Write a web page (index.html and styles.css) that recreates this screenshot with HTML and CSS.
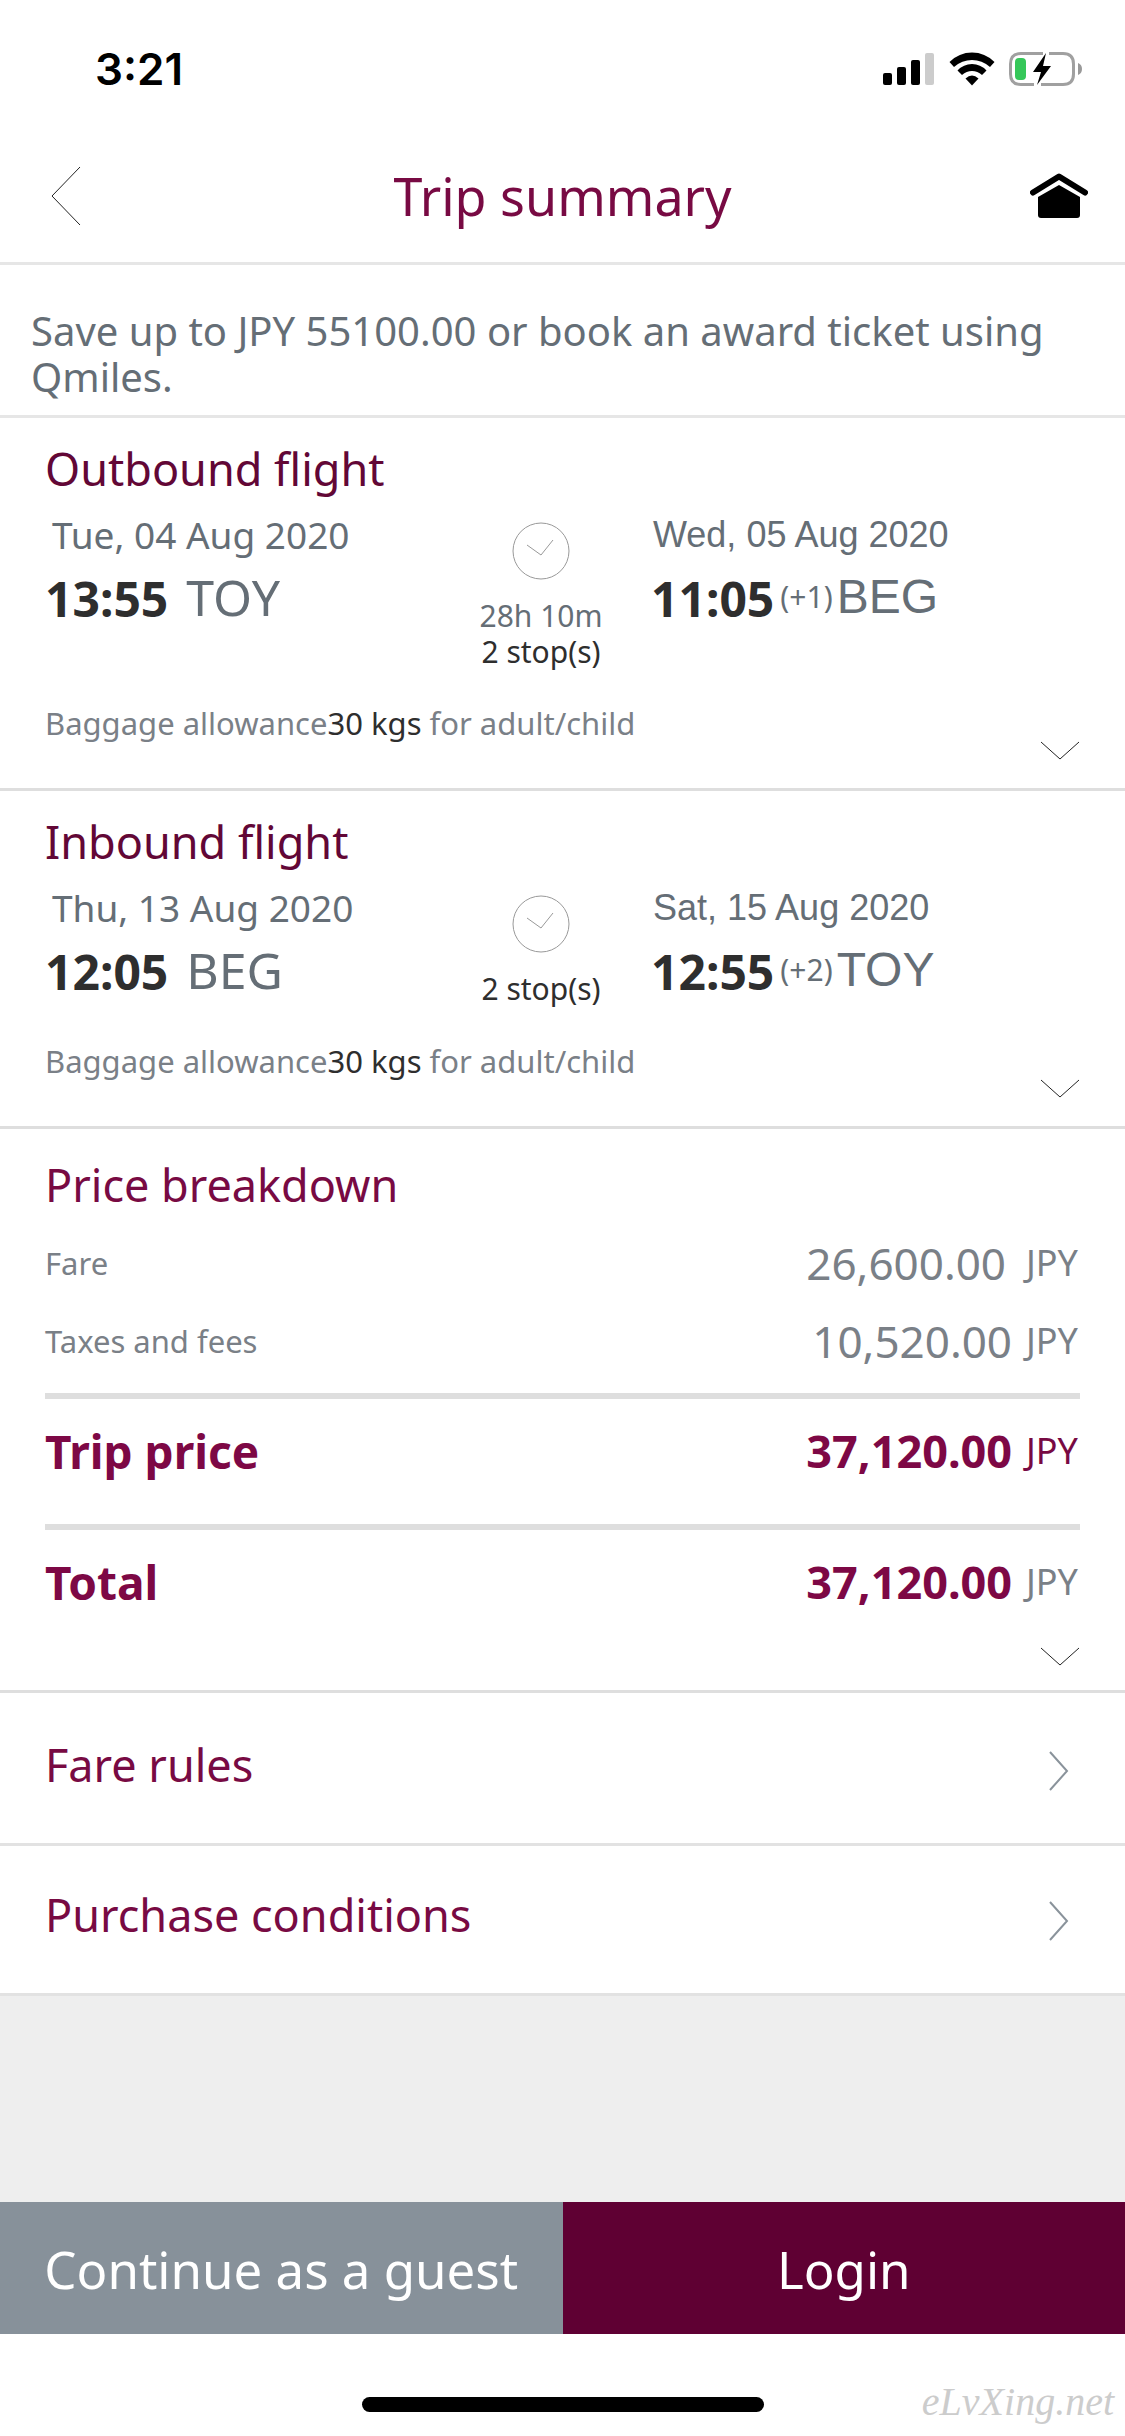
FILE: index.html
```html
<!DOCTYPE html>
<html lang="en">
<head>
<meta charset="utf-8">
<meta name="viewport" content="width=device-width, initial-scale=1">
<title>Trip summary</title>
<link rel="stylesheet" href="styles.css">
</head>
<body>
<div class="status">
  <span class="status-time">3:21</span>
  <div class="status-icons">
    <svg class="signal" viewBox="0 0 52 34" aria-hidden="true">
      <rect x="0" y="21" width="9" height="12" rx="2"/><rect x="14" y="15" width="9" height="18" rx="2"/>
      <rect x="28" y="8" width="9" height="25" rx="2"/><rect x="42" y="1" width="9" height="32" rx="2" fill="#ccc"/>
    </svg>
    <svg class="wifi" viewBox="0 0 46 34" aria-hidden="true">
      <path d="M0.500 10Q10 0.500 23 0.500T45.500 10L41 15Q33 8 23 8T5 15Z"/>
      <path d="M8.500 18.500Q14.500 12 23 12T37.500 18.500L33 23Q28.500 19 23 19T13 23Z"/>
      <path d="M16.500 26.500Q23 20.500 29.500 26.500L23 33.500Z"/>
    </svg>
    <svg class="battery" viewBox="0 0 74 34" aria-hidden="true">
      <path d="M34 1.500H12Q1.500 1.500 1.500 12V22Q1.500 32.500 12 32.500H25M40 1.500H54Q64.500 1.500 64.500 12V22Q64.500 32.500 54 32.500H32" fill="none" stroke="#a0a0a0" stroke-width="3"/>
      <path d="M69 11Q73 12.500 73 17T69 23Z" fill="#999"/>
      <rect x="6" y="6" width="11" height="22" rx="4" fill="#35c759"/>
      <path d="M37 1L24 20H32L28 33L42 14H34Z"/>
    </svg>
  </div>
</div>

<header class="header">
  <button class="icon-button" type="button" aria-label="Back">
    <svg class="back" viewBox="0 0 30 60" aria-hidden="true"><path d="M29 1L1 30L29 59" fill="none" stroke="#222"/></svg>
  </button>
  <h1 class="title">Trip summary</h1>
  <a class="icon-button" href="#home" aria-label="Home">
    <svg class="home" viewBox="0 0 58 46" aria-hidden="true">
      <path d="M3 19.500L29 3.500L55 19.500" fill="none" stroke="#000" stroke-width="6" stroke-linecap="round" stroke-linejoin="round"/>
      <path d="M8 24L29 12L50 24V42Q50 45 47 45H11Q8 45 8 42Z"/>
    </svg>
  </a>
</header>

<main class="content">
  <p class="notice">Save up to JPY 55100.00 or book an award ticket using Qmiles.</p>

  <section class="flight">
    <h2 class="heading heading-flight">Outbound flight</h2>
    <div class="route">
      <div class="leg">
        <div class="date date-from">Tue, 04 Aug 2020</div>
        <div class="stop"><b class="time">13:55</b><span class="code code-from">TOY</span></div>
      </div>
      <div class="duration">
        <svg class="clock" viewBox="0 0 58 58" aria-hidden="true"><circle cx="29" cy="29" r="28"/><path d="M15 23L29 33L41 18"/></svg>
        <span>28h 10m</span>
        <span class="dark">2 stop(s)</span>
      </div>
      <div class="leg">
        <div class="date date-to">Wed, 05 Aug 2020</div>
        <div class="stop"><b class="time">11:05</b><span class="plus">(+1)</span><span class="code code-to">BEG</span></div>
      </div>
    </div>
    <div class="baggage">
      <p class="allowance">Baggage allowance<span class="dark">30 kgs</span> for adult/child</p>
      <button class="expand" type="button" aria-label="Show outbound flight details"><svg class="down" viewBox="0 0 40 20" aria-hidden="true"><path d="M1 1L20 18L39 1"/></svg></button>
    </div>
  </section>

  <section class="flight">
    <h2 class="heading heading-flight">Inbound flight</h2>
    <div class="route">
      <div class="leg">
        <div class="date date-from">Thu, 13 Aug 2020</div>
        <div class="stop"><b class="time">12:05</b><span class="code code-from">BEG</span></div>
      </div>
      <div class="duration">
        <svg class="clock" viewBox="0 0 58 58" aria-hidden="true"><circle cx="29" cy="29" r="28"/><path d="M15 23L29 33L41 18"/></svg>
        <span class="dark">2 stop(s)</span>
      </div>
      <div class="leg">
        <div class="date date-to">Sat, 15 Aug 2020</div>
        <div class="stop"><b class="time">12:55</b><span class="plus">(+2)</span><span class="code code-to">TOY</span></div>
      </div>
    </div>
    <div class="baggage">
      <p class="allowance">Baggage allowance<span class="dark">30 kgs</span> for adult/child</p>
      <button class="expand" type="button" aria-label="Show inbound flight details"><svg class="down" viewBox="0 0 40 20" aria-hidden="true"><path d="M1 1L20 18L39 1"/></svg></button>
    </div>
  </section>

  <section class="price">
    <h2 class="heading">Price breakdown</h2>
    <dl class="rows">
      <div class="row"><dt>Fare</dt><dd><span class="amount">26,600.00</span><span class="currency currency-wide">JPY</span></dd></div>
      <div class="row"><dt>Taxes and fees</dt><dd><span class="amount">10,520.00</span><span class="currency">JPY</span></dd></div>
      <div class="row row-sum"><dt>Trip price</dt><dd><span class="amount">37,120.00</span><span class="currency currency-plum">JPY</span></dd></div>
      <div class="row row-sum"><dt>Total</dt><dd><span class="amount">37,120.00</span><span class="currency">JPY</span></dd></div>
    </dl>
    <button class="expand" type="button" aria-label="Show price details"><svg class="down" viewBox="0 0 40 20" aria-hidden="true"><path d="M1 1L20 18L39 1"/></svg></button>
  </section>

  <nav class="links">
    <a class="link" href="#fare-rules">Fare rules<svg class="next" viewBox="0 0 20 40" aria-hidden="true"><path d="M1 1L18 20L1 39"/></svg></a>
    <a class="link" href="#purchase-conditions">Purchase conditions<svg class="next" viewBox="0 0 20 40" aria-hidden="true"><path d="M1 1L18 20L1 39"/></svg></a>
  </nav>
</main>

<footer class="footer">
  <div class="actions">
    <button class="action action-guest" type="button">Continue as a guest</button>
    <button class="action action-login" type="button">Login</button>
  </div>
  <div class="bottom">
    <div class="indicator"></div>
    <span class="watermark">eLvXing.net</span>
  </div>
</footer>
</body>
</html>
```
FILE: styles.css
```css
* { box-sizing: border-box; }
body {
  margin: 0;
  min-height: 100vh;
  display: flex;
  flex-direction: column;
  background: #fff;
  color: #656e76;
  font-family: "Noto Sans", sans-serif;
}
h1, h2, p, dl, dd { margin: 0; font-weight: 400; }
button { padding: 0; border: 0; background: none; font: inherit; }
svg { display: block; }

.status {
  height: 128px;
  padding: 10px 42px 0 95px;
  display: flex;
  align-items: center;
  justify-content: space-between;
  color: #000;
}
.status-time { font: 600 44px/56px Inter, sans-serif; }
.status-icons { display: flex; gap: 14px; }
.signal { width: 52px; height: 34px; }
.wifi { width: 46px; height: 34px; }
.battery { width: 74px; height: 34px; }

.header {
  height: 137px;
  padding: 2px 37px 0;
  display: grid;
  grid-template-columns: 58px 1fr 58px;
  align-items: center;
  border-bottom: 3px solid #e6e6e6;
}
.title { text-align: center; font-size: 52px; line-height: 72px; color: #780a43; }
.back { width: 30px; height: 60px; margin-left: 14px; }
.home { width: 58px; height: 46px; }

.content { flex: 1; background: #eee; }
.notice {
  padding: 43px 31px 15px;
  background: #fff;
  border-bottom: 3px solid #e6e6e6;
  font-size: 40px;
  line-height: 46px;
}
.heading { font-size: 45px; line-height: 60px; color: #780a43; }
.heading-flight { color: #620736; }
.dark { color: #2e2e2e; }

.flight {
  padding: 21px 45px 27px;
  background: #fff;
  border-bottom: 3px solid #dedede;
}
.route {
  margin-top: 10px;
  display: grid;
  grid-template-columns: minmax(0, 386fr) minmax(0, 124fr) minmax(0, 429fr);
  column-gap: 48px;
}
.date { line-height: 52px; }
.date-from { padding-left: 7px; font-size: 37px; }
.date-to { padding-left: 2px; font-family: "Liberation Sans", sans-serif; font-size: 36px; }
.stop { display: flex; line-height: 72px; }
.time { padding-top: 2px; font-size: 48px; color: #2e2e2e; }
.code-from { margin-left: 18px; font-size: 50px; }
.code-to { margin-left: 4px; font-family: "Liberation Sans", sans-serif; font-size: 48px; }
.plus { margin-left: 6px; font-size: 30px; }
.duration {
  padding-top: 13px;
  display: flex;
  flex-direction: column;
  align-items: center;
  font-size: 30px;
  line-height: 36px;
  white-space: nowrap;
}
.clock { width: 58px; height: 58px; margin-bottom: 18px; fill: none; stroke: #999; stroke-width: 1; }
.baggage { margin-top: 33px; display: flex; justify-content: space-between; align-items: flex-end; }
.allowance { margin-bottom: 18px; font-size: 31px; line-height: 40px; color: #7a8087; }
.expand { display: block; }
.down { width: 40px; height: 20px; fill: none; stroke: #222; stroke-width: 1; }

.price {
  padding: 26px 45px 23px;
  background: #fff;
  border-bottom: 3px solid #dedede;
}
.rows { margin-top: 9px; }
.row {
  display: flex;
  justify-content: space-between;
  font-size: 31px;
  line-height: 78px;
  color: #7a8087;
}
.row dd { display: flex; padding-right: 2px; }
.amount { font-size: 44px; }
.currency { margin-left: 14px; font-size: 36px; }
.currency-wide { margin-left: 20px; }
.currency-plum { color: #780a43; }
.row-sum { margin-bottom: 34px; padding-top: 13px; border-top: 6px solid #dedede; }
.row-sum:nth-child(3) { margin-top: 13px; }
.row-sum:last-child { margin-bottom: 26px; }
.row-sum dt, .row-sum .amount { font-weight: 700; color: #7d0845; }
.row-sum dt { font-size: 46px; }
.row-sum .amount { font-size: 45px; }
.price .expand { margin-left: auto; }

.link {
  padding: 42px 56px 48px 45px;
  display: flex;
  justify-content: space-between;
  align-items: flex-end;
  background: #fff;
  border-bottom: 3px solid #e2e2e2;
  color: #780a43;
  font-size: 45px;
  line-height: 60px;
  text-decoration: none;
}
.link:last-child { padding-top: 39px; padding-bottom: 48px; }
.next { width: 20px; height: 40px; margin-bottom: 4px; fill: none; stroke: #8a939b; stroke-width: 2; }

.actions { display: grid; grid-template-columns: 1fr 1fr; }
.action { padding: 31px 0 29px; color: #fff; font-size: 51px; line-height: 72px; }
.action-guest { background: #87919a; }
.action-login { background: #5f0033; }
.bottom {
  position: relative;
  padding: 63px 0 24px;
}
.indicator { width: 402px; height: 15px; margin: 0 auto; border-radius: 8px; background: #000; }
.watermark {
  position: absolute;
  right: 11px;
  bottom: 10px;
  color: #ccc;
  font: italic 40px/48px "Liberation Serif", serif;
}
```
